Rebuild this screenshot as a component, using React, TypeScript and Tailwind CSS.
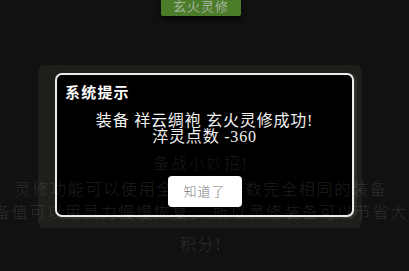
import React from "react";

export default function App() {
  const font = "font-['Liberation_Serif','Noto_Sans_CJK_SC',serif]";
  return (
    <div className={`relative w-[409px] h-[271px] overflow-hidden bg-[#111111] ${font}`}>
      {/* page content */}
      <div className="flex flex-col items-center pr-[7px]">
        <div className="-mt-[3px] flex h-[19px] w-[80px] items-center justify-center rounded-b-[2px] bg-[#4a7c2a] text-[13px] leading-none tracking-[1px] text-[#a6b4a0] shadow-[0_4px_5px_rgba(0,0,0,0.6)]">
          玄火灵修
        </div>
        <div className="relative z-20 mt-[136px] flex flex-col items-center text-[16px] font-light leading-[23px] tracking-[1.76px] text-[rgba(190,190,190,0.18)]">
          <div className="whitespace-nowrap text-[rgba(190,190,190,0.15)]">备战小妙招!</div>
          <div className="mt-[3px] whitespace-nowrap">灵修功能可以使用全身属性参数完全相同的装备</div>
          <div className="whitespace-nowrap">装备值可以用灵力慢慢恢复， 所以灵修装备可以节省大量</div>
          <div className="mt-[9px] whitespace-nowrap">积分!</div>
        </div>
      </div>

      {/* dialog overlay */}
      <div className="absolute left-[38px] top-[65px] h-[163px] w-[324px] rounded-[6px] bg-[#1f1e1b]" />
      <div className="absolute left-[55px] top-[73px] flex h-[144px] w-[299px] flex-col rounded-[7px] border-2 border-[#ececec] bg-black px-[8px] pt-[8px] shadow-[2px_1px_3px_rgba(120,120,120,0.35)]">
        <div className="text-[15px] font-bold leading-[20px] tracking-[1.2px] text-white">系统提示</div>
        <div className="mt-[10px] flex flex-col items-center text-[16px] leading-[16px] tracking-[0.8px] text-[#f2f2f2]">
          <div className="whitespace-nowrap">装备 祥云绸袍 玄火灵修成功!</div>
          <div className="whitespace-nowrap">淬灵点数 -360</div>
        </div>
        <div className="mt-[31px] flex justify-center">
          <div className="relative z-30 flex h-[31px] w-[74px] items-center justify-center rounded-[4px] bg-white text-[13px] font-light tracking-[1px] text-[#7a7a7a]">
            知道了
          </div>
        </div>
      </div>
    </div>
  );
}
